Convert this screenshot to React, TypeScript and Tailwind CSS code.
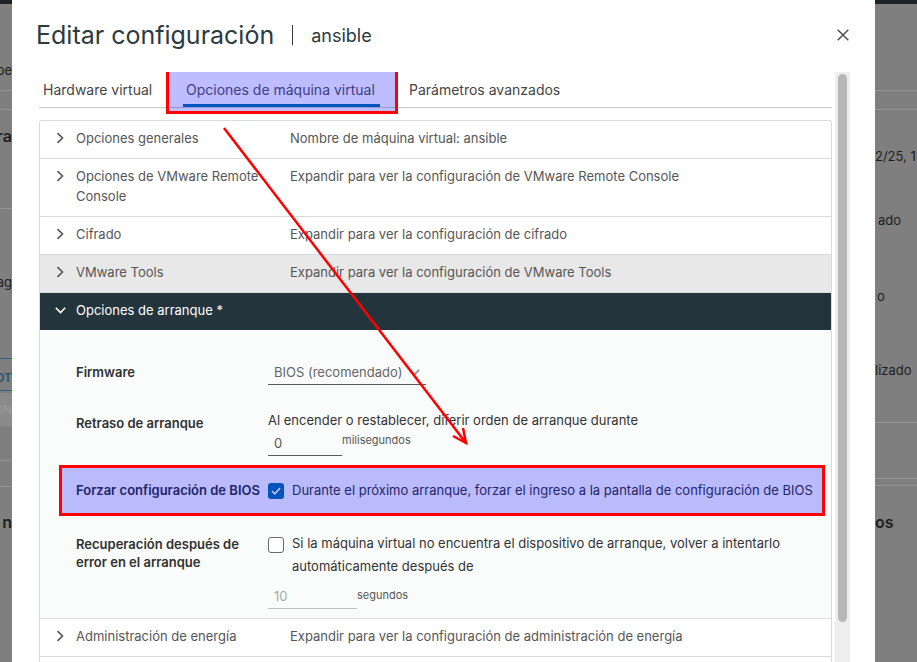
import type { ReactNode } from 'react';

const FONT = "font-['Inter','Liberation_Sans',sans-serif]";

function ChevronRight() {
  return (
    <svg width="10" height="12" viewBox="0 0 10 12" className="shrink-0 text-[#565656]">
      <path d="M2.5 1.2 L7.5 6 L2.5 10.8" fill="none" stroke="currentColor" strokeWidth="1.6" />
    </svg>
  );
}

function ChevronDown({ className }: { className?: string }) {
  return (
    <svg width="11" height="7" viewBox="0 0 11 7" className={className}>
      <path d="M0.8 0.8 L5.5 5.6 L10.2 0.8" fill="none" stroke="currentColor" strokeWidth="1.6" />
    </svg>
  );
}

// highlight drawn over a piece of the page: red frame + translucent blue wash
function Highlight({ className }: { className: string }) {
  return (
    <div
      className={`pointer-events-none absolute border-[3px] border-[#ff0000] bg-[rgba(0,0,255,0.26)] ${className}`}
    />
  );
}

function AccordionRow({ title, desc, hover }: { title: ReactNode; desc: string; hover?: boolean }) {
  return (
    <div
      className={`flex items-start border-b border-[#d7dbdd] pl-[15px] pt-[7px] pb-[10px] text-[13px] leading-5 text-[#565656] ${
        hover ? 'bg-[#e8e8e8]' : 'bg-white'
      }`}
    >
      <div className="flex h-5 items-center">
        <ChevronRight />
      </div>
      <div className="ml-[11px] w-[214px] shrink-0 pr-3">{title}</div>
      <div className="whitespace-nowrap">{desc}</div>
    </div>
  );
}

function Label({ children, className = '' }: { children: ReactNode; className?: string }) {
  return <div className={`w-[192px] shrink-0 text-[13px] font-semibold text-[#313131] ${className}`}>{children}</div>;
}

function BootOptions() {
  return (
    <div className="flex flex-col border-b border-[#d7dbdd] bg-[#fafcfc] pb-[9px]">
      {/* Firmware */}
      <div className="mt-[31px] flex h-[24px] items-center pl-[36px]">
        <Label>Firmware</Label>
        <div className="flex h-[24px] w-[158px] items-center justify-between border-b border-[#5b5b5b] pl-[6px] pr-[6px] text-[13px] text-[#666]">
          <span className="whitespace-nowrap">BIOS (recomendado)</span>
          <ChevronDown className="shrink-0 text-[#8a8a8a]" />
        </div>
      </div>

      {/* Retraso */}
      <div className="mt-[25px] flex items-start pl-[36px]">
        <Label className="pt-[3px] leading-5">Retraso de arranque</Label>
        <div className="flex flex-col">
          <div className="text-[13px] leading-5 text-[#333]">
            Al encender o restablecer, diferir orden de arranque durante
          </div>
          <div className="mt-[2px] flex items-start">
            <div className="flex h-[24px] w-[74px] items-center border-b border-[#5b5b5b] pl-[6px] text-[13px] text-[#565656]">
              0
            </div>
            <span className="text-[11px] leading-4 text-[#565656]">milisegundos</span>
          </div>
        </div>
      </div>

      {/* Forzar BIOS */}
      <div className="relative ml-[19px] mr-[6px] mt-[9px] flex h-[51px] items-center pl-[17px]">
        <Label className="whitespace-nowrap">Forzar configuración de BIOS</Label>
        <div className="flex h-4 w-4 shrink-0 items-center justify-center rounded-[3px] bg-[#0072a3]">
          <svg width="10" height="8" viewBox="0 0 10 8">
            <path d="M1 4.2 L3.8 6.8 L9 1.2" fill="none" stroke="#fff" strokeWidth="1.7" />
          </svg>
        </div>
        <span className="ml-2 whitespace-nowrap text-[13px] text-[#333]">
          Durante el próximo arranque, forzar el ingreso a la pantalla de configuración de BIOS
        </span>
        <Highlight className="inset-0" />
      </div>

      {/* Recuperación */}
      <div className="mt-[16px] flex items-start pl-[36px]">
        <Label className="pt-[3px] leading-[18px]">
          Recuperación después de
          <br />
          error en el arranque
        </Label>
        <div className="flex flex-col">
          <div className="flex items-start">
            <div className="mt-[5px] h-4 w-4 shrink-0 rounded-[3px] border border-[#6b6b6b] bg-white" />
            <div className="ml-2 whitespace-nowrap text-[13px] leading-[23px] text-[#333]">
              Si la máquina virtual no encuentra el dispositivo de arranque, volver a intentarlo
              <br />
              automáticamente después de
            </div>
          </div>
          <div className="mt-[7px] flex items-start">
            <div className="flex h-[24px] w-[89px] items-center border-b border-[#bdbdbd] pl-[6px] text-[13px] text-[#a9a9a9]">
              10
            </div>
            <span className="mt-[2px] text-[11px] leading-4 text-[#565656]">segundos</span>
          </div>
        </div>
      </div>
    </div>
  );
}

function Line({ className = 'bg-[#959595]' }: { className?: string }) {
  return <div className={`h-px w-full ${className}`} />;
}

function LeftStrip() {
  return (
    <div className="flex w-[12px] shrink-0 flex-col overflow-hidden bg-[#7f7f7f] text-[13px] text-[#1e1e1e]">
      <div className="h-[4px] bg-[#1d2327]" />
      <div className="mt-[58px] flex h-[18px] items-center justify-end whitespace-nowrap">pe</div>
      <div className="mt-[10px]"><Line /></div>
      <div className="mt-[18px]"><Line /></div>
      <div className="mt-[16px] flex h-[20px] items-center justify-end whitespace-nowrap text-[16px] font-semibold">ra</div>
      <div className="mt-[62px]"><Line /></div>
      <div className="mt-[65px] flex h-[18px] items-center justify-end whitespace-nowrap">ag</div>
      <div className="mt-[66px]"><Line className="bg-[#34607c]" /></div>
      <div className="mt-[10px] flex h-[18px] items-center justify-end whitespace-nowrap text-[12px] font-semibold text-[#2a5673]">
        OT
      </div>
      <div className="mt-[3px]"><Line className="bg-[#34607c]" /></div>
      <div className="mt-[2px] flex h-[33px] items-center justify-end whitespace-nowrap bg-[#8a8a8a] text-[12px] text-[#9a9a9a]">
        ON
      </div>
      <div className="mt-[34px]"><Line /></div>
      <div className="mt-[25px]"><Line /></div>
      <div className="mt-[25px] flex h-[20px] items-center justify-end whitespace-nowrap text-[16px] font-semibold">n</div>
    </div>
  );
}

function RightStrip() {
  return (
    <div className="flex w-[42px] shrink-0 flex-col overflow-hidden bg-[#7f7f7f] text-[13px] text-[#1e1e1e]">
      <div className="h-[4px] bg-[#1d2327]" />
      <div className="mt-[86px]"><Line /></div>
      <div className="mt-[18px]"><Line /></div>
      <div className="mt-[38px] flex h-[18px] items-center whitespace-nowrap">2/25, 13</div>
      <div className="mt-[46px] flex h-[18px] items-center whitespace-nowrap pl-[3px]">ado</div>
      <div className="mt-[58px] flex h-[18px] items-center whitespace-nowrap pl-[2px]">o</div>
      <div className="mt-[56px] flex h-[18px] items-center whitespace-nowrap">lizado</div>
      <div className="mt-[42px]"><Line /></div>
      <div className="mt-[55px]"><Line /></div>
      <div className="mt-[6px]"><Line /></div>
      <div className="mt-[26px] flex h-[20px] items-center whitespace-nowrap text-[16px] font-semibold">os</div>
    </div>
  );
}

export default function App() {
  return (
    <div className={`relative flex h-[662px] w-[917px] overflow-hidden ${FONT}`}>
      <LeftStrip />

      {/* Modal */}
      <div className="flex w-[863px] shrink-0 flex-col bg-white">
        <div className="flex items-center justify-between pl-[24px] pr-[26px] pt-[19px]">
          <div className="flex items-center gap-[18px]">
            <h1 className="text-[25px] leading-[32px] text-[#2c3a42]">Editar configuración</h1>
            <div className="h-[20px] w-px bg-[#3a3a3a]" />
            <span className="text-[18px] text-[#2c3a42]">ansible</span>
          </div>
          <svg width="12" height="12" viewBox="0 0 12 12" className="text-[#4a4a4a]">
            <path d="M0.7 0.7 L11.3 11.3 M11.3 0.7 L0.7 11.3" stroke="currentColor" strokeWidth="1.4" />
          </svg>
        </div>

        <div className="mt-[21px] flex min-h-0 flex-1 pl-[27px]">
          <div className="w-[793px] shrink-0 overflow-hidden">
            {/* Tabs */}
            <div className="flex h-[36px] items-stretch gap-[26px] border-b border-[#cccccc] pl-px text-[14px]">
              <div className="flex w-[117px] items-center whitespace-nowrap px-[3px] text-[#454545]">Hardware virtual</div>
              <div className="relative flex w-[197px] items-center whitespace-nowrap border-b-[3px] border-[#0072a3] px-[3px] pt-[2px] text-[#565656]">
                Opciones de máquina virtual
                <Highlight className="-left-[17px] -top-[3px] h-[45px] w-[232px]" />
              </div>
              <div className="flex items-center whitespace-nowrap px-[3px] text-[#454545]">Parámetros avanzados</div>
            </div>

            {/* Accordion */}
            <div className="mt-3 overflow-hidden rounded-t-[3px] border-x border-t border-[#d7dbdd]">
              <AccordionRow title="Opciones generales" desc="Nombre de máquina virtual: ansible" />
              <AccordionRow
                title="Opciones de VMware Remote Console"
                desc="Expandir para ver la configuración de VMware Remote Console"
              />
              <AccordionRow title="Cifrado" desc="Expandir para ver la configuración de cifrado" />
              <AccordionRow title="VMware Tools" desc="Expandir para ver la configuración de VMware Tools" hover />
              <div className="flex h-[37px] items-center bg-[#23343d] pb-[2px] pl-[15px] text-[13px] text-white">
                <ChevronDown className="text-white" />
                <span className="ml-[10px]">Opciones de arranque *</span>
              </div>
              <BootOptions />
              <AccordionRow
                title="Administración de energía"
                desc="Expandir para ver la configuración de administración de energía"
              />
              <div className="h-[20px] bg-white" />
            </div>
          </div>

          {/* Scrollbar */}
          <div className="ml-[3px] w-[15px] shrink-0 bg-[#eeeeee] pl-[3px] pt-[2px]">
            <div className="h-[548px] w-[9px] rounded-full bg-[#b7b7b7]" />
          </div>
        </div>
      </div>

      <RightStrip />

      {/* Annotation arrow */}
      <svg
        className="pointer-events-none absolute left-0 top-0"
        width="917"
        height="662"
        viewBox="0 0 917 662"
      >
        <path d="M224 128 L466 443" stroke="#ff0000" strokeWidth="2.5" fill="none" />
        <path d="M463 428 L466 443 L453 436" stroke="#ff0000" strokeWidth="2.5" fill="none" strokeLinejoin="miter" />
      </svg>
    </div>
  );
}
